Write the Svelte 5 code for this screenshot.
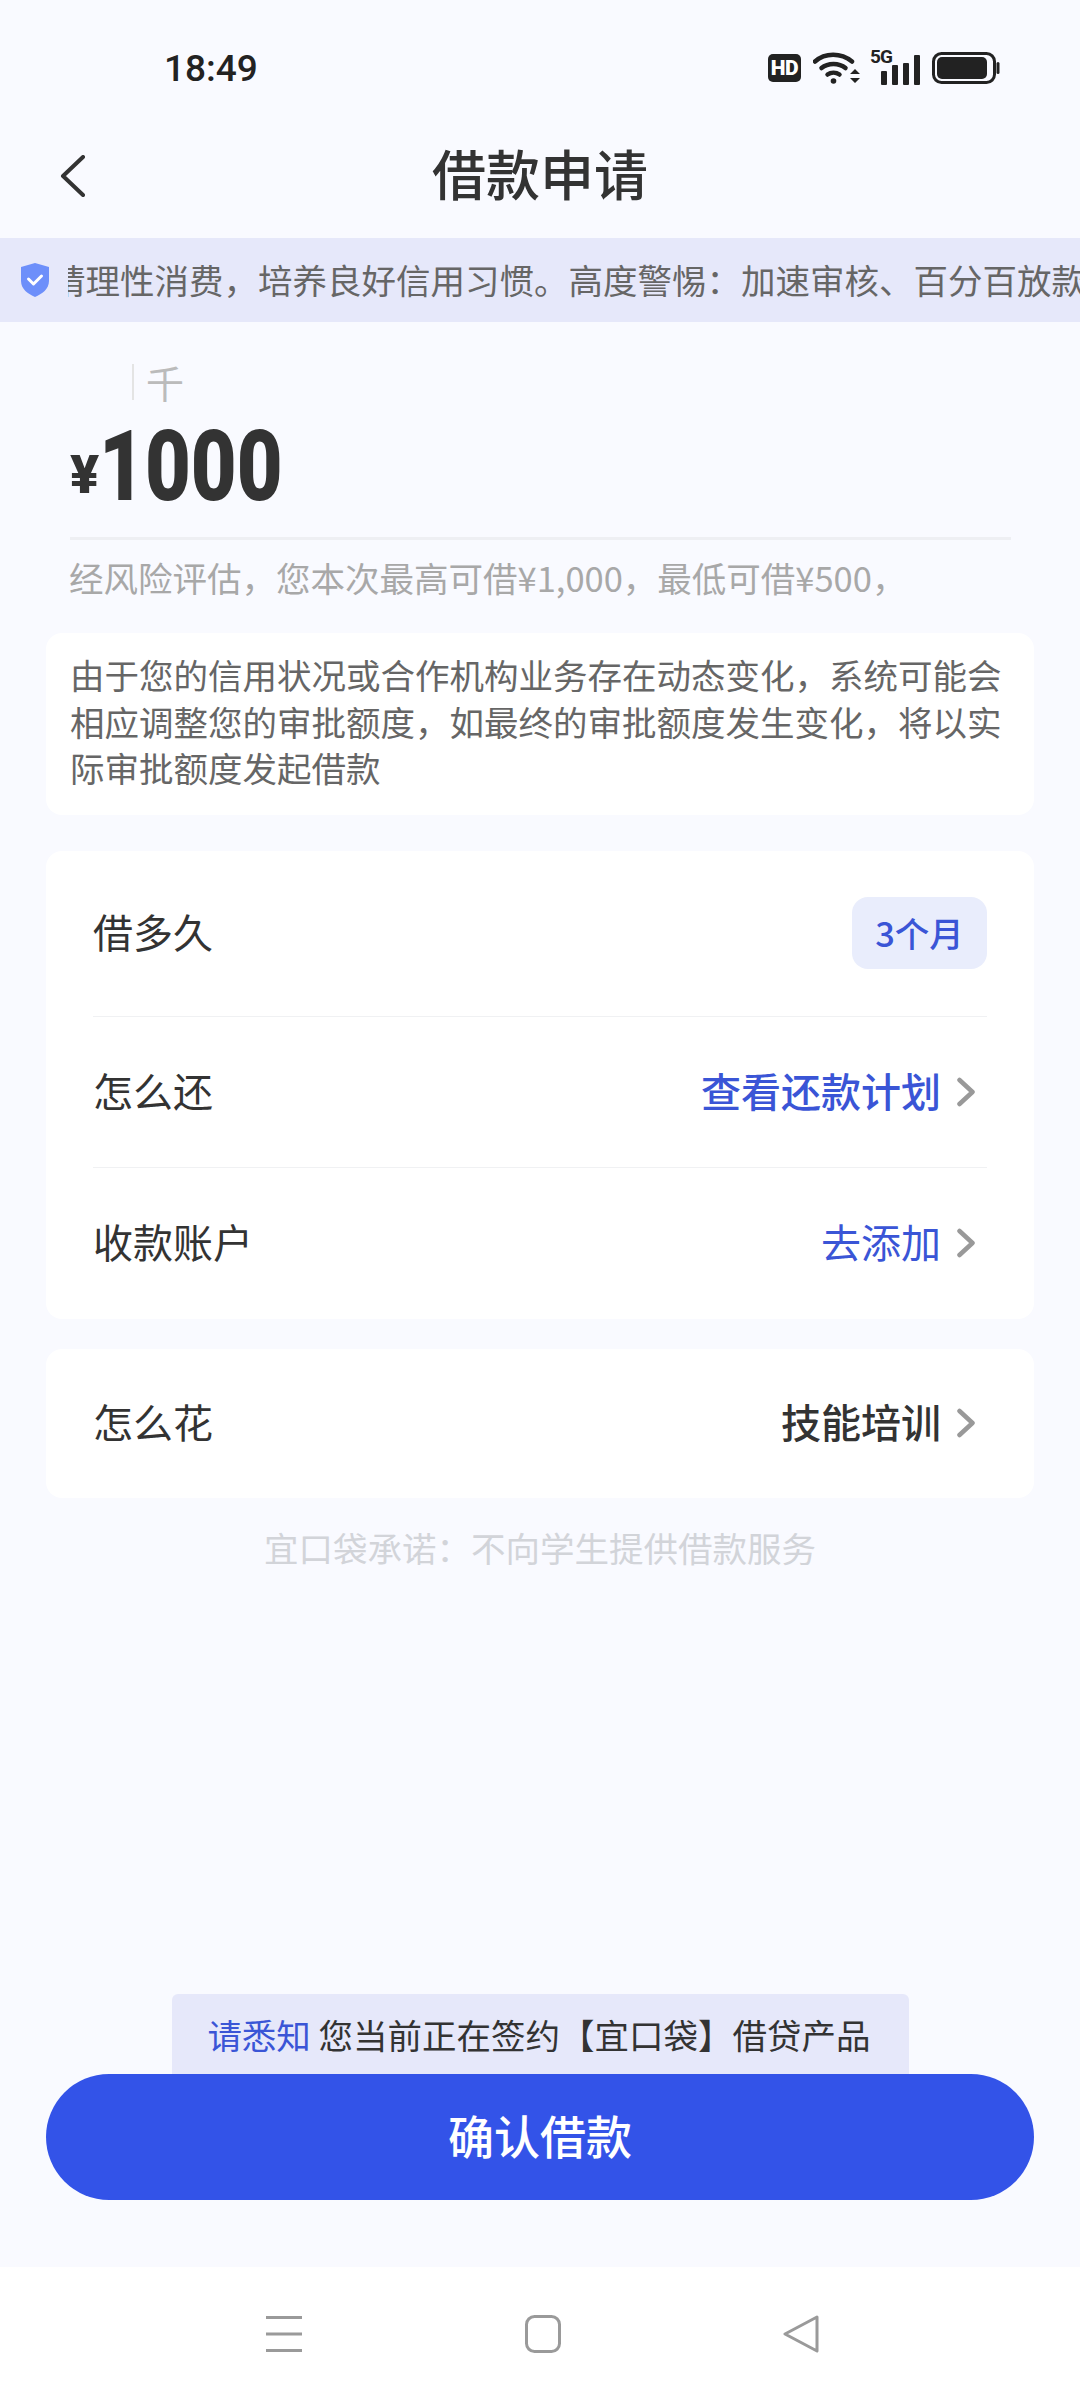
<script lang="ts">
    const rows = [
        { label: "借多久", value: "3个月", kind: "pill" },
        { label: "怎么还", value: "查看还款计划", kind: "strong" },
        { label: "收款账户", value: "去添加", kind: "link" },
    ];
</script>

<div class="page">
    <div class="status">
        <span class="time">18:49</span>
        <div class="status-icons">
            <span class="hd">HD</span>
            <svg class="wifi" width="48" height="34" viewBox="0 0 48 34" fill="none" stroke="#222" stroke-width="4.5" stroke-linecap="round">
                <path d="M2 10.5C12 1.5 28 1.5 39 10.5" />
                <path d="M8.5 17C15 11.5 26 11.5 32.5 17" />
                <path d="M14.5 23.5C18 21 23 21 26.5 23.5" />
                <circle cx="20.5" cy="30" r="2.8" fill="#222" stroke="none" />
                <path d="M37 23h10l-5-5zM37 27h10l-5 5z" fill="#222" stroke="none" />
            </svg>
            <div class="signal">
                <span class="five-g">5G</span>
                <i style="height:14px"></i>
                <i style="height:20px"></i>
                <i style="height:22px"></i>
                <i style="height:30px"></i>
            </div>
            <svg class="battery" width="68" height="32" viewBox="0 0 68 32">
                <rect x="1.5" y="1.5" width="61" height="29" rx="8" fill="none" stroke="#222" stroke-width="3" />
                <rect x="5" y="5" width="50" height="22" rx="5" fill="#222" />
                <rect x="64.5" y="10" width="3" height="12" rx="1.5" fill="#222" />
            </svg>
        </div>
    </div>

    <header class="nav">
        <svg class="back" width="26" height="42" viewBox="0 0 26 42" fill="none" stroke="#333" stroke-width="4" stroke-linecap="round" stroke-linejoin="round">
            <path d="M23 2L3 21l20 19" />
        </svg>
        <h1>借款申请</h1>
    </header>

    <div class="banner">
        <svg class="shield" width="30" height="36" viewBox="0 0 30 36">
            <path d="M15 1l14 4v14c0 8-7 13-14 16C8 32 1 27 1 19V5z" fill="#6d8ffa" />
            <path d="M8.500 17l5 5 8-8" fill="none" stroke="#fff" stroke-width="3" stroke-linecap="round" stroke-linejoin="round" />
        </svg>
        <div class="marquee">
            <span>请理性消费，培养良好信用习惯。高度警惕：加速审核、百分百放款</span>
        </div>
    </div>

    <section class="amount">
        <div class="unit"><span class="caret"></span><span>千</span></div>
        <div class="figure"><span class="yen">¥</span><span class="num">1000</span></div>
    </section>

    <p class="risk">经风险评估，您本次最高可借¥1,000，最低可借¥500，</p>

    <div class="card note">由于您的信用状况或合作机构业务存在动态变化，系统可能会相应调整您的审批额度，如最终的审批额度发生变化，将以实际审批额度发起借款</div>

    <div class="card list">
        {#each rows as row}
            <div class="row">
                <span class="label">{row.label}</span>
                {#if row.kind === "pill"}
                    <span class="pill">{row.value}</span>
                {:else}
                    <span class="value {row.kind}">{row.value}</span>
                    <svg class="chev" width="20" height="30" viewBox="0 0 20 30" fill="none" stroke="#999" stroke-width="4.500" stroke-linecap="round" stroke-linejoin="round">
                        <path d="M3.500 3l13 12-13 12" />
                    </svg>
                {/if}
            </div>
        {/each}
    </div>

    <div class="card list single">
        <div class="row">
            <span class="label">怎么花</span>
            <span class="value dark">技能培训</span>
            <svg class="chev" width="20" height="30" viewBox="0 0 20 30" fill="none" stroke="#999" stroke-width="4.500" stroke-linecap="round" stroke-linejoin="round">
                <path d="M3.500 3l13 12-13 12" />
            </svg>
        </div>
    </div>

    <p class="promise">宜口袋承诺：不向学生提供借款服务</p>

    <div class="bottom">
        <div class="notice"><span class="blue">请悉知</span> 您当前正在签约【宜口袋】借贷产品</div>
        <button class="confirm">确认借款</button>
    </div>

    <nav class="sysbar">
        <svg width="38" height="36" viewBox="0 0 38 36" fill="#9a9a9a">
            <rect x="1" y="0" width="36" height="3" />
            <rect x="1" y="16.500" width="36" height="3" />
            <rect x="1" y="33" width="36" height="3" />
        </svg>
        <svg width="36" height="38" viewBox="0 0 36 38" fill="none" stroke="#9a9a9a" stroke-width="3">
            <rect x="1.500" y="1.500" width="33" height="35" rx="8" />
        </svg>
        <svg width="36" height="38" viewBox="0 0 36 38" fill="none" stroke="#9a9a9a" stroke-width="3" stroke-linejoin="round">
            <path d="M34 2L2 19l32 17z" />
        </svg>
    </nav>
</div>

<style>
    :global(body) {
        background: #f9faff;
    }

    .page {
        width: 1080px;
        height: 2400px;
        display: flex;
        flex-direction: column;
        background: #f9faff;
        font-family: "Noto Sans CJK SC", "Noto Sans", sans-serif;
        color: #333;
        overflow: hidden;
    }

    .status {
        height: 130px;
        flex: none;
        box-sizing: border-box;
        padding: 46px 80px 0 164px;
        display: flex;
        justify-content: space-between;
        align-items: flex-start;
    }

    .time {
        font-family: Roboto, sans-serif;
        font-weight: 500;
        font-size: 37px;
        line-height: 46px;
        color: #222;
    }

    .status-icons {
        display: flex;
        align-items: center;
        gap: 12px;
        padding-top: 5px;
    }

    .hd {
        width: 33px;
        height: 28px;
        border-radius: 5px;
        background: #222;
        color: #fff;
        font-family: Roboto, sans-serif;
        font-weight: 900;
        font-size: 21px;
        line-height: 28px;
        text-align: center;
        letter-spacing: -0.5px;
    }

    .signal {
        position: relative;
        width: 50px;
        height: 34px;
        display: flex;
        align-items: flex-end;
        justify-content: flex-end;
        gap: 5px;
        margin-left: -3px;
    }

    .signal i {
        width: 6px;
        border-radius: 1px;
        background: #222;
    }

    .five-g {
        position: absolute;
        left: 0;
        top: -4px;
        font-family: Roboto, sans-serif;
        font-weight: 700;
        font-size: 19px;
        line-height: 20px;
        letter-spacing: -1px;
        color: #222;
    }

    .nav {
        height: 108px;
        flex: none;
        display: grid;
        grid-template-columns: 1fr auto 1fr;
        align-items: center;
        padding-left: 60px;
        padding-right: 60px;
    }

    .nav h1 {
        margin: -22px 0 0;
        font-size: 54px;
        font-weight: 500;
        line-height: 72px;
        color: #333;
    }

    .back {
        margin-top: -16px;
    }

    .banner {
        height: 84px;
        flex: none;
        display: flex;
        align-items: center;
        background: #e6e8fa;
        padding-left: 20px;
        overflow: hidden;
    }

    .shield {
        flex: none;
    }

    .marquee {
        flex: 1;
        min-width: 0;
        margin-left: 18px;
        padding-bottom: 2px;
        overflow: hidden;
        white-space: nowrap;
        font-size: 34.5px;
        line-height: 46px;
        color: #666;
    }

    .marquee span {
        display: inline-block;
        margin-left: -17px;
    }

    .amount {
        flex: none;
        padding: 37px 0 0 70px;
    }

    .unit {
        display: flex;
        align-items: center;
        height: 46px;
        padding-left: 62px;
        gap: 12px;
        font-size: 38px;
        line-height: 46px;
        color: #bbb;
    }

    .caret {
        width: 2px;
        height: 36px;
        background: #e4e4e4;
    }

    .figure {
        display: flex;
        align-items: flex-end;
        height: 96px;
        font-family: Roboto, sans-serif;
        font-weight: 900;
        color: #333;
        border-bottom: 3px solid #eeeff3;
        width: 941px;
        padding-bottom: 36px;
    }

    .yen {
        font-size: 54px;
        line-height: 56px;
        margin-bottom: -2px;
    }

    .num {
        display: inline-block;
        font-size: 99px;
        line-height: 84px;
        transform: scaleX(0.8);
        transform-origin: left bottom;
        margin-bottom: -7px;
    }

    .risk {
        margin: 14px 0 0;
        padding-left: 69px;
        font-size: 34.5px;
        line-height: 46px;
        color: #a8a8a8;
        white-space: nowrap;
    }

    .card {
        margin: 0 46px;
        background: #fff;
        border-radius: 16px;
        flex: none;
    }

    .note {
        margin-top: 33px;
        padding: 18px 24px 24px;
        font-size: 34.5px;
        line-height: 46.5px;
        color: #666;
    }

    .list {
        margin-top: 36px;
        padding: 0 47px;
    }

    .list.single {
        margin-top: 30px;
    }

    .row {
        height: 151px;
        display: flex;
        align-items: center;
        box-sizing: border-box;
        border-bottom: 1px solid #f0f1f3;
    }

    .row:first-child {
        height: 166px;
    }

    .row:last-child {
        border-bottom: none;
    }

    .single .row {
        height: 149px;
    }

    .label {
        padding-bottom: 4px;
        font-size: 40px;
        color: #333;
        margin-right: auto;
    }

    .pill {
        width: 135px;
        height: 72px;
        border-radius: 16px;
        background: #e9edfc;
        color: #3a55d6;
        font-size: 34.5px;
        font-weight: 500;
        line-height: 70px;
        text-align: center;
    }

    .value {
        padding-bottom: 4px;
        font-size: 40px;
        color: #3a55d6;
    }

    .value.strong {
        font-weight: 500;
    }

    .value.dark {
        font-weight: 500;
        color: #333;
    }

    .chev {
        margin-left: 15px;
        margin-right: 11px;
    }

    .promise {
        margin: 26px 0 0;
        text-align: center;
        font-size: 34.5px;
        line-height: 46px;
        color: #d2d4d9;
    }

    .bottom {
        margin-top: auto;
        display: flex;
        flex-direction: column;
        align-items: center;
        padding-bottom: 67px;
    }

    .notice {
        width: 737px;
        height: 80px;
        box-sizing: border-box;
        padding-top: 17px;
        padding-right: 2px;
        border-radius: 6px 6px 0 0;
        background: #e6e8fa;
        text-align: center;
        font-size: 34.5px;
        line-height: 46px;
        color: #333;
        white-space: nowrap;
    }

    .blue {
        color: #3a55d6;
    }

    .confirm {
        width: 988px;
        height: 126px;
        padding: 0 0 7px;
        border: none;
        border-radius: 63px;
        background: #3353e8;
        color: #fff;
        font-family: inherit;
        font-size: 46px;
        font-weight: 500;
    }

    .sysbar {
        height: 133px;
        flex: none;
        box-sizing: border-box;
        padding-left: 3px;
        background: #fff;
        display: flex;
        align-items: center;
        justify-content: center;
        gap: 222px;
    }
</style>
